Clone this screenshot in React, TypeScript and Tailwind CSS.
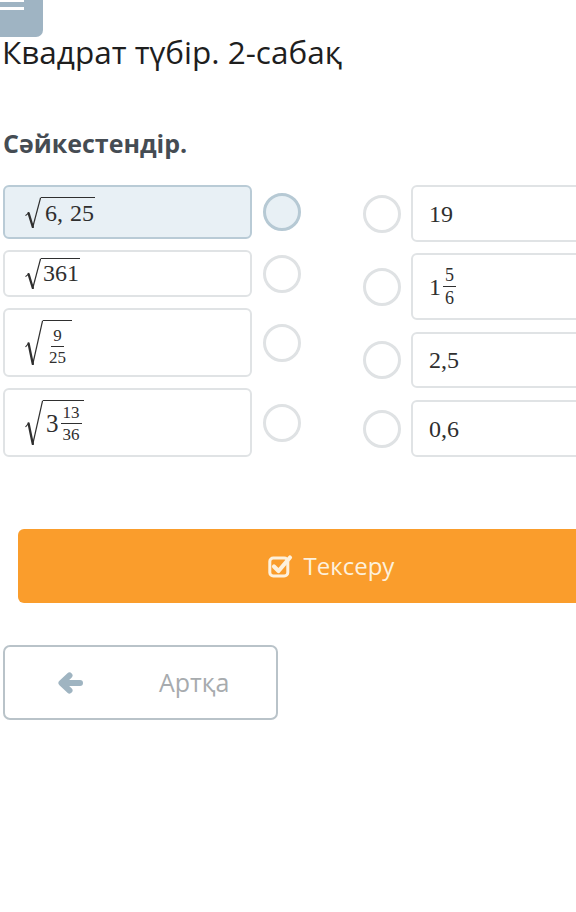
import React from "react";

const INK = "#2f2f2f";

function Rad({ h, w = 16 }: { h: number; w?: number }) {
  return (
    <svg width={w} height={h} viewBox={`0 0 ${w} ${h}`} className="block shrink-0">
      <path d={`M0.5 ${h * 0.6} L3.6 ${h * 0.52}`} stroke={INK} strokeWidth={1.1} fill="none" />
      <path d={`M3.6 ${h * 0.52} L7.8 ${h - 1}`} stroke={INK} strokeWidth={2.3} fill="none" strokeLinecap="round" />
      <path d={`M7.8 ${h - 1} L${w - 0.4} 0.6`} stroke={INK} strokeWidth={1.2} fill="none" />
    </svg>
  );
}

function Frac({ n, d, size }: { n: string; d: string; size: number }) {
  return (
    <span className="inline-flex flex-col items-center" style={{ fontSize: size, lineHeight: 1 }}>
      <span className="px-[2px] pb-[2px] border-b border-[#2f2f2f]">{n}</span>
      <span className="px-[2px] pt-[2px]">{d}</span>
    </span>
  );
}

const serif = "font-['Liberation_Serif',serif] text-[#2f2f2f]";

function Circle({ active }: { active?: boolean }) {
  return (
    <div
      className={
        "w-[38px] h-[38px] rounded-full shrink-0 border-[3.5px] " +
        (active ? "border-[#b6c9d4] bg-[#e8f0f5]" : "border-[#dfe2e4] bg-white")
      }
    />
  );
}

function LeftBox({ h, active, children }: { h: number; active?: boolean; children: React.ReactNode }) {
  return (
    <div className="flex items-center">
      <div
        className={
          "w-[249px] rounded-[6px] border-2 flex items-center pl-[20px] " +
          (active ? "bg-[#e8f0f5] border-[#b9cbd6]" : "bg-white border-[#e0e3e5]")
        }
        style={{ height: h }}
      >
        {children}
      </div>
      <div className="ml-[11px]">
        <Circle active={active} />
      </div>
    </div>
  );
}

function RightBox({ h, children, mt }: { h: number; children: React.ReactNode; mt: number }) {
  return (
    <div className="flex items-center" style={{ marginTop: mt }}>
      <Circle />
      <div
        className="ml-[10px] w-[249px] rounded-[6px] border-2 bg-white border-[#e0e3e5] flex items-center pl-[16px]"
        style={{ height: h }}
      >
        {children}
      </div>
    </div>
  );
}

export default function App() {
  return (
    <div className="w-[576px] h-[912px] overflow-hidden bg-white font-['Open_Sans',sans-serif]">
      <div className="w-[680px] pl-[3px]">
        <div className="-ml-[3px] w-[43px] h-[37px] bg-[#9fb4c3] rounded-br-[7px] relative overflow-hidden">
          <div className="h-[2px] w-[24px] bg-white" />
          <div className="mt-[5px] h-[3px] w-[24px] bg-white" />
        </div>
        <h1 className="-ml-[1px] text-[31.5px] leading-[30px] text-[#1e1e1e] font-normal">
          Квадрат түбір. 2-сабақ
        </h1>
        <h2 className="mt-[64px] text-[25px] leading-[24px] font-bold text-[#454c53]">Сәйкестендір.</h2>

        <div className="mt-[30px] flex items-start">
          <div className="flex flex-col gap-[11px]">
            <LeftBox h={54} active>
              <span className={"flex items-start " + serif}>
                <Rad h={31} />
                <span className="border-t-[1.2px] border-[#2f2f2f] pt-[3px] pl-[4px] pr-[1px] text-[24px] leading-[25px]">
                  6,<span className="ml-[7px]">25</span>
                </span>
              </span>
            </LeftBox>
            <LeftBox h={47}>
              <span className={"flex items-start " + serif}>
                <Rad h={31} />
                <span className="border-t-[1.2px] border-[#2f2f2f] pt-[2px] pl-[2px] pr-[1px] text-[24px] leading-[25px]">
                  361
                </span>
              </span>
            </LeftBox>
            <LeftBox h={69}>
              <span className={"flex items-start " + serif}>
                <Rad h={45} w={18} />
                <span className="border-t-[1.2px] border-[#2f2f2f] pt-[3px] pl-[4px] pr-[4px]">
                  <Frac n="9" d="25" size={17} />
                </span>
              </span>
            </LeftBox>
            <LeftBox h={69}>
              <span className={"flex items-start " + serif}>
                <Rad h={45} w={18} />
                <span className="border-t-[1.2px] border-[#2f2f2f] pt-[3px] pl-[3px] pr-[2px] flex items-center">
                  <span className="text-[25px] leading-none mr-[2px]">3</span>
                  <Frac n="13" d="36" size={17} />
                </span>
              </span>
            </LeftBox>
          </div>

          <div className="ml-[62px] flex flex-col">
            <RightBox h={57} mt={0}>
              <span className={serif + " text-[24px] leading-none"}>19</span>
            </RightBox>
            <RightBox h={67} mt={11}>
              <span className={serif + " flex items-center"}>
                <span className="text-[24px] leading-none mr-[2px]">1</span>
                <Frac n="5" d="6" size={18} />
              </span>
            </RightBox>
            <RightBox h={56} mt={12}>
              <span className={serif + " text-[24px] leading-none"}>2,5</span>
            </RightBox>
            <RightBox h={57} mt={12}>
              <span className={serif + " text-[24px] leading-none"}>0,6</span>
            </RightBox>
          </div>
        </div>

        <button className="mt-[72px] ml-[15px] w-[626px] h-[74px] rounded-[6px] bg-[#fa9d2c] flex items-center justify-center text-[#fdf1dd]">
          <svg width="26" height="24" viewBox="0 0 26 24" className="mr-[10px]">
            <rect x="1.8" y="4" width="18" height="18" rx="3.5" fill="none" stroke="#fdf1dd" strokeWidth="3" />
            <path d="M6 12.5 L10.5 17 L22 3.5" fill="none" stroke="#fdf1dd" strokeWidth="4.2" strokeLinecap="round" strokeLinejoin="round" />
          </svg>
          <span className="text-[24px] leading-none">Тексеру</span>
        </button>

        <button className="mt-[42px] w-[275px] h-[75px] rounded-[7px] border-2 border-[#b9c3c9] bg-white flex items-center pl-[52px]">
          <svg width="26" height="22" viewBox="0 0 26 22">
            <path d="M23 11 H5 M12.5 3.5 L4.5 11 L12.5 18.5" fill="none" stroke="#9fb4c1" strokeWidth="6" strokeLinecap="round" strokeLinejoin="round" />
          </svg>
          <span className="ml-[76px] text-[25px] leading-none text-[#a7abae]">Артқа</span>
        </button>
      </div>
    </div>
  );
}
